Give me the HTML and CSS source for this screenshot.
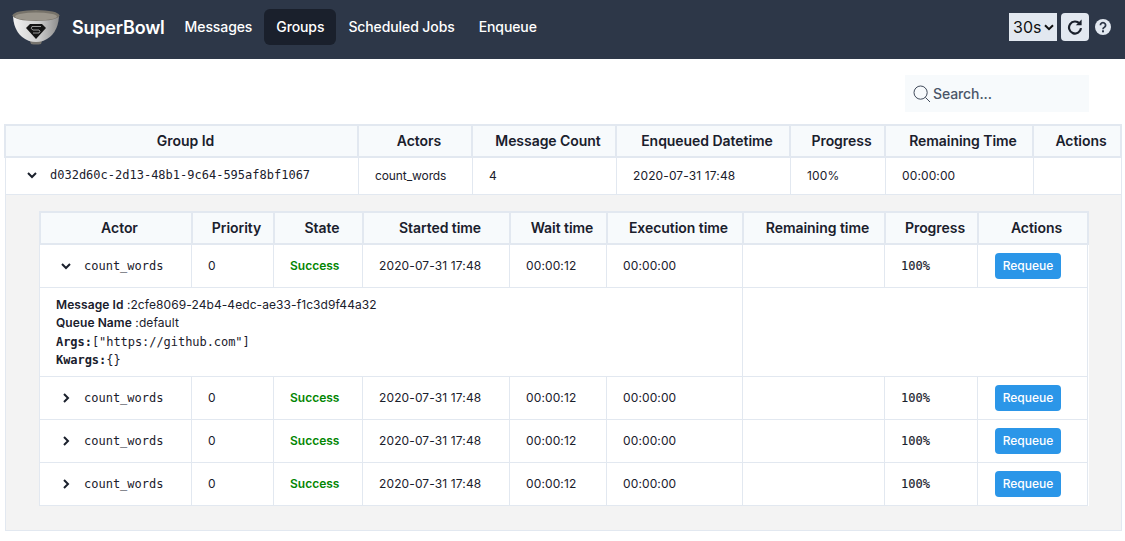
FILE: index.html
```html
<!DOCTYPE html>
<html lang="en">
<head>
    <meta charset="UTF-8">
    <title>SuperBowl</title>
    <link rel="stylesheet" href="styles.css">
</head>
<body>
    <nav class="navbar">
        <div class="nav-left">
            <svg class="logo" width="48" height="36" viewBox="0 0 48 36">
                <defs>
                    <linearGradient id="bowlFill" x1="0" y1="0" x2="1" y2="0">
                        <stop offset="0" stop-color="#f1f1f1"/>
                        <stop offset="0.55" stop-color="#cfcfcf"/>
                        <stop offset="1" stop-color="#8d8d8d"/>
                    </linearGradient>
                </defs>
                <path d="M18 32 L30 32 L29 35 Q24 36 19 35 Z" fill="#77746e"/>
                <path d="M1 7 Q2 26 17 32 Q24 34 31 32 Q46 26 47 7 Z" fill="url(#bowlFill)"/>
                <ellipse cx="24" cy="6.5" rx="23.5" ry="5.5" fill="#77736a"/>
                <ellipse cx="24" cy="7.5" rx="21" ry="4" fill="#9a958b"/>
                <path d="M18 15 L30 15 L34 19 L24 30 L14 19 Z" fill="#141414"/>
                <path d="M29 17.5 H20 Q18 20 21 21 H27 Q29 22 27 24 H21" fill="none" stroke="#a8a8a8" stroke-width="0.9"/>
            </svg>
            <span class="brand">SuperBowl</span>
            <a class="nav-link">Messages</a>
            <a class="nav-link active">Groups</a>
            <a class="nav-link">Scheduled Jobs</a>
            <a class="nav-link">Enqueue</a>
        </div>
        <div class="nav-right">
            <div class="interval">
                <select class="interval-select">
                    <option>30s</option>
                </select>
                <svg class="interval-chevron" width="10" height="7" viewBox="0 0 10 7">
                    <path d="M1 1.2 L5 5.2 L9 1.2" fill="none" stroke="#111" stroke-width="2"/>
                </svg>
            </div>
            <button class="refresh">
                <svg width="16" height="16" viewBox="0 0 16 16">
                    <path d="M12.6 4.6 A6 6 0 1 0 14 9.2" fill="none" stroke="#1a202c" stroke-width="2.2"/>
                    <path d="M8.8 6.2 L14.6 6.2 L14.6 0.6 Z" fill="#1a202c"/>
                </svg>
            </button>
            <svg class="help" width="16" height="16" viewBox="0 0 16 16">
                <circle cx="8" cy="8" r="8" fill="#e2e8f0"/>
                <path d="M5.4 6.2 A2.6 2.5 0 1 1 9.4 8.3 Q8 9 8 10.3" fill="none" stroke="#2d3748" stroke-width="1.8"/>
                <rect x="7" y="11.3" width="2" height="2" fill="#2d3748"/>
            </svg>
        </div>
    </nav>

    <div class="search-row">
        <label class="search">
            <svg width="18" height="18" viewBox="0 0 18 18">
                <circle cx="7.6" cy="7.6" r="6.6" fill="none" stroke="#2d3748" stroke-width="0.9"/>
                <path d="M12.4 12.4 L17 17" stroke="#2d3748" stroke-width="0.9"/>
            </svg>
            <input class="search-input" type="text" placeholder="Search...">
        </label>
    </div>

    <main class="content">
        <table class="grid groups">
            <colgroup>
                <col class="g1"><col class="g2"><col class="g3"><col class="g4"><col class="g5"><col class="g6"><col class="g7">
            </colgroup>
            <thead>
                <tr>
                    <th>Group Id</th>
                    <th>Actors</th>
                    <th>Message Count</th>
                    <th>Enqueued Datetime</th>
                    <th>Progress</th>
                    <th>Remaining Time</th>
                    <th>Actions</th>
                </tr>
            </thead>
            <tbody>
                <tr class="group-row">
                    <td class="mono">
                        <span class="toggle">
                            <svg class="chev" width="10" height="10" viewBox="0 0 10 10"><path d="M1 3 L5 7 L9 3"/></svg>
                            d032d60c-2d13-48b1-9c64-595af8bf1067
                        </span>
                    </td>
                    <td class="narrow">count_words</td>
                    <td>4</td>
                    <td>2020-07-31 17:48</td>
                    <td>100%</td>
                    <td>00:00:00</td>
                    <td></td>
                </tr>
                <tr>
                    <td class="expansion" colspan="7">
                        <table class="grid messages">
                            <colgroup>
                                <col class="m1"><col class="m2"><col class="m3"><col class="m4"><col class="m5"><col class="m6"><col class="m7"><col class="m8"><col class="m9">
                            </colgroup>
                            <thead>
                                <tr>
                                    <th>Actor</th>
                                    <th>Priority</th>
                                    <th>State</th>
                                    <th>Started time</th>
                                    <th>Wait time</th>
                                    <th>Execution time</th>
                                    <th>Remaining time</th>
                                    <th>Progress</th>
                                    <th>Actions</th>
                                </tr>
                            </thead>
                            <tbody>
                                <tr class="msg-row">
                                    <td class="mono"><span class="toggle inner"><svg class="chev" width="10" height="10" viewBox="0 0 10 10"><path d="M1 3 L5 7 L9 3"/></svg>count_words</span></td>
                                    <td>0</td>
                                    <td class="success">Success</td>
                                    <td>2020-07-31 17:48</td>
                                    <td>00:00:12</td>
                                    <td>00:00:00</td>
                                    <td></td>
                                    <td class="mono strong">100%</td>
                                    <td><button class="requeue">Requeue</button></td>
                                </tr>
                                <tr class="detail-row">
                                    <td colspan="6">
                                        <div><b>Message Id</b> :2cfe8069-24b4-4edc-ae33-f1c3d9f44a32</div>
                                        <div><b>Queue Name</b> :default</div>
                                        <div class="mono tight"><b>Args:</b>["https://github.com"]</div>
                                        <div class="mono tight"><b>Kwargs:</b>{}</div>
                                    </td>
                                    <td colspan="3"></td>
                                </tr>
                                <tr class="msg-row">
                                    <td class="mono"><span class="toggle inner"><svg class="chev" width="10" height="10" viewBox="0 0 10 10"><path d="M3 1 L7 5 L3 9"/></svg>count_words</span></td>
                                    <td>0</td>
                                    <td class="success">Success</td>
                                    <td>2020-07-31 17:48</td>
                                    <td>00:00:12</td>
                                    <td>00:00:00</td>
                                    <td></td>
                                    <td class="mono strong">100%</td>
                                    <td><button class="requeue">Requeue</button></td>
                                </tr>
                                <tr class="msg-row">
                                    <td class="mono"><span class="toggle inner"><svg class="chev" width="10" height="10" viewBox="0 0 10 10"><path d="M3 1 L7 5 L3 9"/></svg>count_words</span></td>
                                    <td>0</td>
                                    <td class="success">Success</td>
                                    <td>2020-07-31 17:48</td>
                                    <td>00:00:12</td>
                                    <td>00:00:00</td>
                                    <td></td>
                                    <td class="mono strong">100%</td>
                                    <td><button class="requeue">Requeue</button></td>
                                </tr>
                                <tr class="msg-row">
                                    <td class="mono"><span class="toggle inner"><svg class="chev" width="10" height="10" viewBox="0 0 10 10"><path d="M3 1 L7 5 L3 9"/></svg>count_words</span></td>
                                    <td>0</td>
                                    <td class="success">Success</td>
                                    <td>2020-07-31 17:48</td>
                                    <td>00:00:12</td>
                                    <td>00:00:00</td>
                                    <td></td>
                                    <td class="mono strong">100%</td>
                                    <td><button class="requeue">Requeue</button></td>
                                </tr>
                            </tbody>
                        </table>
                    </td>
                </tr>
            </tbody>
        </table>
    </main>
</body>
</html>
```

FILE: styles.css
```css
body {
    margin: 0;
    font-family: 'Inter', 'Liberation Sans', sans-serif;
    color: #1a202c;
    background: #fff;
}

/* Top bar */
.navbar {
    height: 59px;
    box-sizing: border-box;
    padding: 0 14px 5px 12px;
    background: #2d3748;
    display: flex;
    align-items: center;
    justify-content: space-between;
}
.nav-left {
    display: flex;
    align-items: center;
}
.logo {
    margin-right: 12px;
}
.brand {
    color: #fff;
    font-size: 18px;
    font-weight: 600;
    letter-spacing: -0.2px;
    margin-right: 8px;
}
.nav-link {
    color: #fff;
    font-size: 14px;
    font-weight: 500;
    letter-spacing: -0.1px;
    padding: 10px 12px;
    line-height: 16px;
    border-radius: 6px;
}
.nav-link.active {
    background: #1a202c;
}
.nav-right {
    display: flex;
    align-items: center;
    gap: 4px;
}
.interval {
    position: relative;
    width: 48px;
    height: 28px;
}
.interval-select {
    appearance: none;
    width: 100%;
    height: 100%;
    border: none;
    border-radius: 0;
    background: #e2e8f0;
    color: #111;
    font-family: 'Inter', sans-serif;
    font-size: 16px;
    padding: 0 0 0 4px;
}
.interval-chevron {
    position: absolute;
    right: 3px;
    top: 11px;
}
.refresh {
    width: 28px;
    height: 28px;
    padding: 0;
    border: none;
    border-radius: 4px;
    background: #e2e8f0;
    display: flex;
    align-items: center;
    justify-content: center;
}
.help {
    margin-left: 2px;
}

/* Search */
.search-row {
    display: flex;
    justify-content: flex-end;
    padding: 16px 36px 12px 0;
}
.search {
    width: 184px;
    height: 37px;
    box-sizing: border-box;
    padding-left: 8px;
    background: #f7fafc;
    display: flex;
    align-items: center;
    gap: 2px;
}
.search-input {
    width: 140px;
    border: none;
    outline: none;
    background: transparent;
    padding: 0;
    font-family: 'Inter', sans-serif;
    font-size: 14px;
    font-weight: 500;
    letter-spacing: -0.1px;
}
.search-input::placeholder {
    color: #4a5568;
    opacity: 1;
}

/* Tables */
.content {
    padding: 0 4px;
}
.grid {
    border-collapse: collapse;
    table-layout: fixed;
    background: #fff;
}
.grid th,
.grid td {
    border: 1px solid #e2e8f0;
    padding: 0 16px;
    overflow: hidden;
    white-space: nowrap;
}
.grid th {
    height: 29px;
    border-width: 2px;
    background: #f7fafc;
    font-size: 14px;
    font-weight: 600;
    letter-spacing: -0.05px;
    text-align: center;
    padding: 0 0 1px 8px;
}
.grid td {
    font-size: 12px;
    letter-spacing: 0.12px;
    color: #1a202c;
}
.groups {
    width: 1116px;
}
.g1 { width: 353px; }
.g2 { width: 114px; }
.g3 { width: 144px; }
.g4 { width: 174px; }
.g5 { width: 95px; }
.g6 { width: 148px; }
.g7 { width: 88px; }

.group-row td {
    height: 34px;
    padding-bottom: 2px;
    padding-left: 16.5px;
}
.expansion {
    background: #f3f3f3;
    padding: 16px 33px 24px 33px !important;
    height: 294px;
}
.messages {
    width: 1048px;
}
.m1 { width: 152px; }
.m2 { width: 82px; }
.m3 { width: 89px; }
.m4 { width: 147px; }
.m5 { width: 97px; }
.m6 { width: 136px; }
.m7 { width: 142px; }
.m8 { width: 93px; }
.m9 { width: 110px; }

.msg-row td {
    height: 41px;
    padding-bottom: 1px;
}
.grid td.mono,
.mono {
    font-family: 'DejaVu Sans Mono', 'Liberation Mono', monospace;
    letter-spacing: 0;
}
.mono.tight {
    letter-spacing: -0.05px;
}
.grid td.strong {
    -webkit-text-stroke: 0.15px #1a202c;
}
.grid td.narrow {
    letter-spacing: -0.1px;
}
.toggle {
    display: flex;
    align-items: center;
    margin-left: 5px;
    gap: 13px;
}
.chev {
    flex: none;
    fill: none;
    stroke: #1a202c;
    stroke-width: 2;
}
.grid td.success {
    color: #038603;
    font-weight: 600;
    letter-spacing: 0;
}
.requeue {
    display: block;
    width: 66px;
    height: 26px;
    margin-left: 1px;
    padding: 0;
    border: none;
    border-radius: 4px;
    background: #2b96e8;
    color: #fff;
    font-family: 'Inter', sans-serif;
    font-size: 12px;
    font-weight: 500;
}
.detail-row td {
    height: 87px;
    padding-top: 1px;
    line-height: 18.3px;
    letter-spacing: 0.08px;
}
.detail-row b {
    font-weight: 600;
}
```
